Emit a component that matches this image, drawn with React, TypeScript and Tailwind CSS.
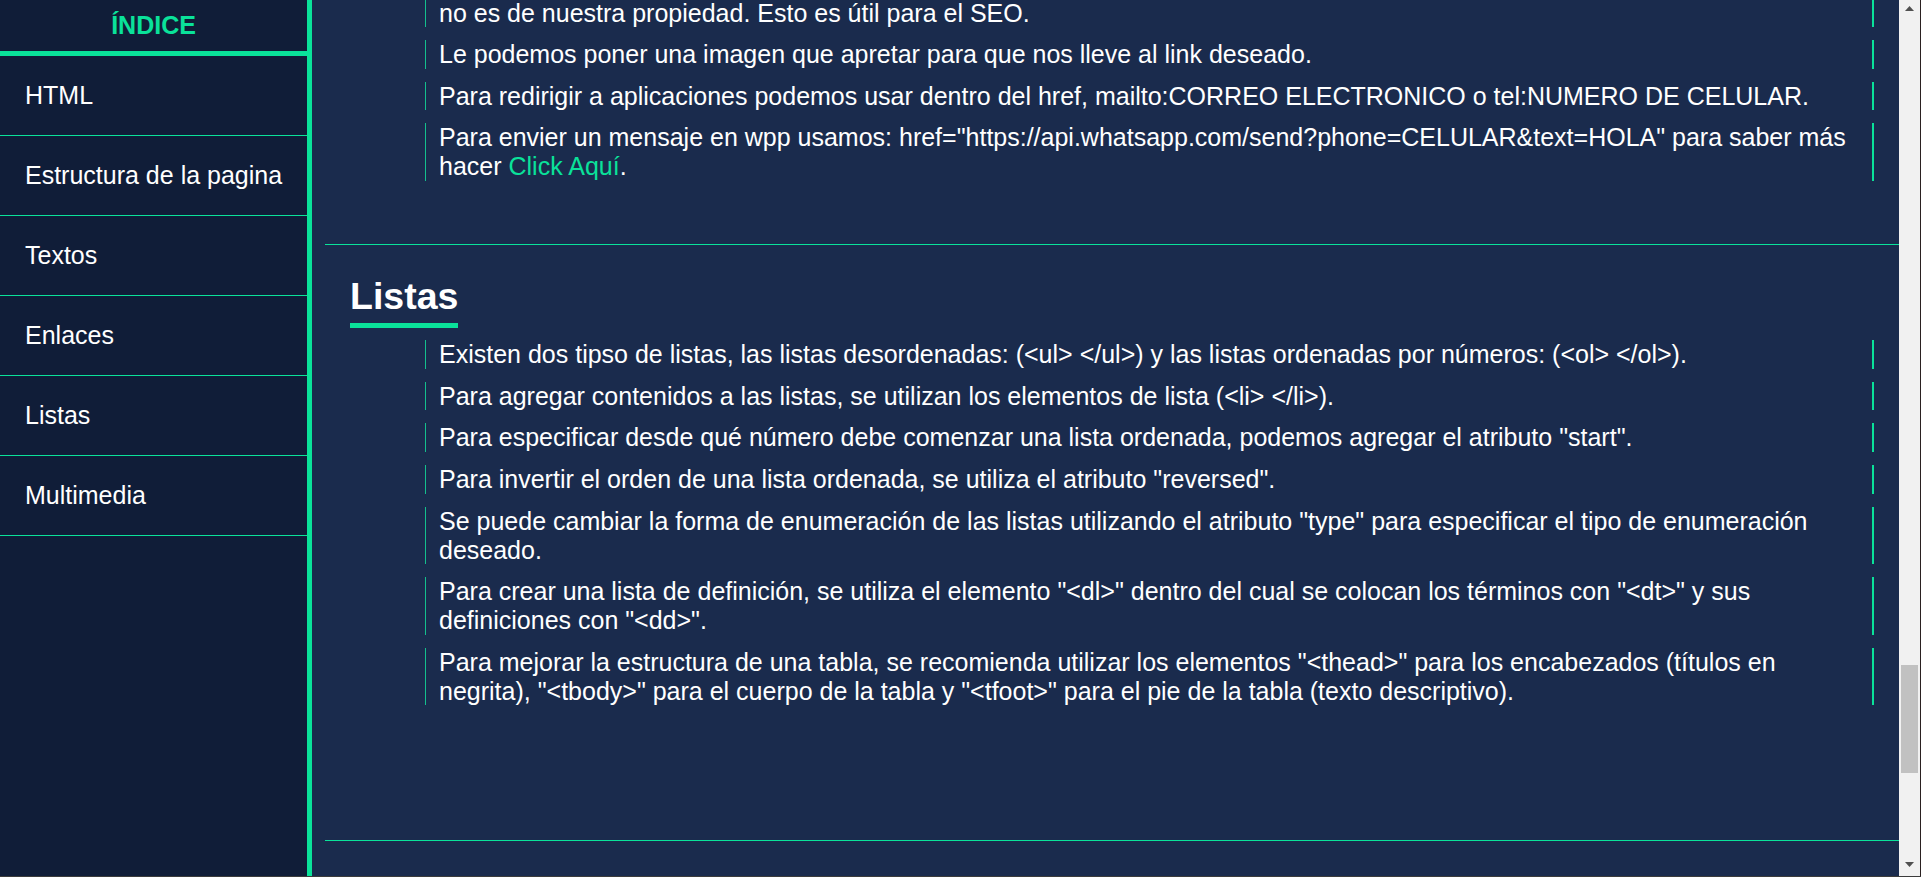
import React from 'react';

const navItems = ['HTML', 'Estructura de la pagina', 'Textos', 'Enlaces', 'Listas', 'Multimedia'];

const listasItems = [
  'Existen dos tipso de listas, las listas desordenadas: (<ul> </ul>) y las listas ordenadas por números: (<ol> </ol>).',
  'Para agregar contenidos a las listas, se utilizan los elementos de lista (<li> </li>).',
  'Para especificar desde qué número debe comenzar una lista ordenada, podemos agregar el atributo "start".',
  'Para invertir el orden de una lista ordenada, se utiliza el atributo "reversed".',
  'Se puede cambiar la forma de enumeración de las listas utilizando el atributo "type" para especificar el tipo de enumeración deseado.',
  'Para crear una lista de definición, se utiliza el elemento "<dl>" dentro del cual se colocan los términos con "<dt>" y sus definiciones con "<dd>".',
  'Para mejorar la estructura de una tabla, se recomienda utilizar los elementos "<thead>" para los encabezados (títulos en negrita), "<tbody>" para el cuerpo de la tabla y "<tfoot>" para el pie de la tabla (texto descriptivo).',
];

const Item = ({ children }: { children: React.ReactNode }) => (
  <li className="border-l border-r-2 border-l-[#14bf8d] border-r-[#0ae29a] pl-[13px] leading-[28.75px]">
    {children}
  </li>
);

const Sidebar = () => (
  <aside className="w-[312px] shrink-0 bg-[#101d38] border-r-[5px] border-[#0ae29a] flex flex-col">
    <div className="h-[56px] border-b-[5px] border-[#0ae29a] flex items-center justify-center">
      <span className="text-[25px] font-bold text-[#0ae29a] leading-[28.75px]">ÍNDICE</span>
    </div>
    <ul>
      {navItems.map((item) => (
        <li
          key={item}
          className="h-[80px] border-b border-[#0ae29a] flex items-center pl-[25px] text-[25px] text-white leading-[28.75px]"
        >
          {item}
        </li>
      ))}
    </ul>
  </aside>
);

const Scrollbar = () => (
  <div className="w-[22px] shrink-0 bg-[#f1f1f1] border-r border-[#2a2020] flex flex-col items-start">
    <svg width="9" height="5" viewBox="0 0 9 5" className="mt-[6px] ml-[6px] block">
      <polygon points="0,5 4.5,0 9,5" fill="#505050" />
    </svg>
    <div className="mt-[654px] ml-[2px] w-[17px] h-[108px] bg-[#c1c1c1]" />
    <svg width="9" height="5" viewBox="0 0 9 5" className="mt-auto mb-[9px] ml-[6px] block">
      <polygon points="0,0 9,0 4.5,5" fill="#505050" />
    </svg>
  </div>
);

const Content = () => (
  <main className="flex-1 min-w-0 bg-[#1a2b4d] text-white text-[25px] overflow-hidden">
    <div className="ml-[13px]">
      <ul className="ml-[100px] mr-[25px] mt-[-1.5px] flex flex-col gap-[12.75px]">
        <Item>no es de nuestra propiedad. Esto es útil para el SEO.</Item>
        <Item>Le podemos poner una imagen que apretar para que nos lleve al link deseado.</Item>
        <Item>
          Para redirigir a aplicaciones podemos usar dentro del href, mailto:CORREO ELECTRONICO o tel:NUMERO DE CELULAR.
        </Item>
        <Item>
          Para envier un mensaje en wpp usamos: href="https://api.whatsapp.com/send?phone=CELULAR&amp;text=HOLA" para saber más
          hacer <a className="text-[#0ae29a]">Click Aquí</a>.
        </Item>
      </ul>

      <div className="mt-[63.5px] h-px bg-[#0ae29a]" />

      <h2 className="ml-[25px] mt-[29.8px] w-fit text-[37.5px] font-bold leading-[43.125px] pb-[5px] border-b-[5px] border-[#0ae29a]">
        Listas
      </h2>

      <ul className="ml-[100px] mr-[25px] mt-[12px] flex flex-col gap-[13px]">
        {listasItems.map((t) => (
          <Item key={t}>{t}</Item>
        ))}
      </ul>

      <div className="mt-[134.1px] h-px bg-[#0ae29a]" />
    </div>
  </main>
);

export default function App() {
  return (
    <div
      className="h-[877px] w-full flex overflow-hidden border-b border-[#3c3c3c]"
      style={{ fontFamily: '"Liberation Sans", Arial, sans-serif' }}
    >
      <Sidebar />
      <Content />
      <Scrollbar />
    </div>
  );
}
